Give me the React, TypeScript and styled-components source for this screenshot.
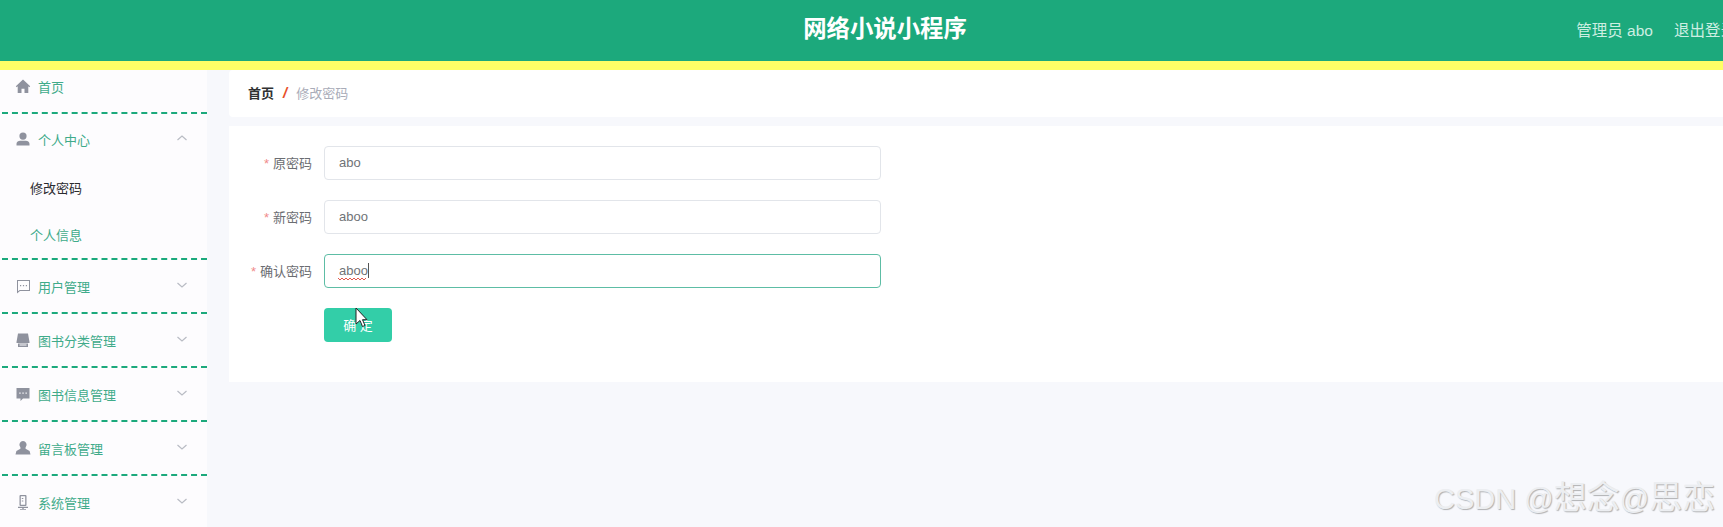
import React from "react";
import styled, { createGlobalStyle } from "styled-components";

const GlobalStyle = createGlobalStyle`
  html, body {
    margin: 0;
    padding: 0;
    height: 527px;
    overflow: hidden;
    background: #f7f8fc;
    font-family: "Liberation Sans", "Noto Sans CJK SC", sans-serif;
  }
`;

const Page = styled.div`
  position: relative;
  width: 1723px;
  height: 527px;
  overflow: hidden;
`;

const Header = styled.header`
  position: relative;
  display: flex;
  align-items: center;
  justify-content: flex-end;
  width: 1770px;
  height: 61px;
  box-sizing: border-box;
  padding-right: 34px;
  background: #1ca97c;
`;

const Title = styled.h1`
  position: absolute;
  left: 0;
  right: 0;
  top: 14px;
  margin: 0;
  text-align: center;
  font-size: 23.4px;
  line-height: 30px;
  font-weight: 700;
  color: #fff;
`;

const HeaderLinks = styled.div`
  display: flex;
  gap: 21px;
  font-size: 15.5px;
  color: #cdeee2;
  white-space: nowrap;
  margin-top: -4px;
`;

const Stripe = styled.div`
  height: 9px;
  background: #ffff66;
`;

const Body = styled.div`
  display: flex;
  width: 1723px;
  height: 457px;
`;

const Sidebar = styled.aside`
  width: 207px;
  flex: none;
  background: #fdfcfe;
  overflow: hidden;
`;

const Group = styled.div`
  & + & {
    margin-left: 2px;
    border-top: 2px dashed #1ca97c;
  }
  & + & > * {
    margin-left: -2px;
  }
`;

const MenuRow = styled.div<{ $open?: boolean }>`
  display: flex;
  align-items: center;
  height: 52px;
  box-sizing: border-box;
  padding: 0 18px ${(p) => (p.$open ? "2px" : "0")} 15px;
  font-size: 13px;
  color: #3fab8a;
`;

const HomeRow = styled(MenuRow)`
  height: 42px;
  padding-bottom: 10px;
`;

const MenuIcon = styled.svg`
  width: 16px;
  height: 16px;
  flex: none;
  margin-right: 7px;
  fill: #8f929e;
`;

const Chevron = styled.svg`
  width: 14px;
  height: 14px;
  margin-left: auto;
  margin-top: -2px;
  fill: none;
  stroke: #b9bcc4;
  stroke-width: 1.2;
`;

const SubItem = styled.div<{ $active?: boolean }>`
  height: 46px;
  box-sizing: border-box;
  padding: 0 0 ${(p) => (p.$active ? "4px" : "2px")} 30px;
  display: flex;
  align-items: center;
  font-size: 13px;
  color: ${(p) => (p.$active ? "#2a2a2e" : "#3fab8a")};
`;

const Main = styled.main`
  flex: 1;
  padding-left: 22px;
  display: flex;
  flex-direction: column;
  gap: 9px;
`;

const Breadcrumb = styled.nav`
  height: 47px;
  box-sizing: border-box;
  display: flex;
  align-items: center;
  padding: 0 0 2px 19px;
  background: #fff;
  border-radius: 4px 0 0 4px;
  font-size: 13px;
`;

const CrumbHome = styled.span`
  color: #303133;
  font-weight: 700;
`;

const CrumbSep = styled.span`
  margin: 0 9px 0 9px;
  color: #e8502a;
  font-size: 15px;
  font-weight: 700;
  font-style: italic;
`;

const CrumbCurrent = styled.span`
  color: #a9acb8;
`;

const Card = styled.section`
  height: 256px;
  box-sizing: border-box;
  padding-top: 20px;
  background: #fff;
`;

const FormRow = styled.div`
  display: flex;
  align-items: center;
  height: 34px;
  margin-bottom: 20px;
`;

const Label = styled.label`
  width: 83px;
  margin-right: 12px;
  padding-bottom: 2px;
  text-align: right;
  font-size: 13px;
  color: #6b6d72;
`;

const Star = styled.span`
  margin-right: 4px;
  color: #f08a8a;
`;

const FieldWrap = styled.div`
  position: relative;
  width: 557px;
  height: 34px;
`;

const Input = styled.input<{ $focus?: boolean }>`
  width: 100%;
  height: 100%;
  box-sizing: border-box;
  padding: 0 14px 2px;
  border: 1px solid #e2e5ea;
  border-radius: 4px;
  outline: none;
  background: #fff;
  font: inherit;
  font-size: 13px;
  color: #707377;
  ${(p) => p.$focus && "border: 1.5px solid #5dbda5;"}
`;

const CaretMark = styled.span`
  position: absolute;
  left: 44px;
  top: 9px;
  width: 1px;
  height: 15px;
  background: #555;
`;

const Squiggle = styled.svg`
  position: absolute;
  left: 14px;
  top: 23px;
  width: 30px;
  height: 4px;
  fill: none;
  stroke: #e2574c;
  stroke-width: 1;
`;

const ButtonRow = styled.div`
  position: relative;
  padding-left: 95px;
`;

const SubmitButton = styled.button`
  width: 68px;
  height: 34px;
  padding: 0 0 2px;
  border: 0;
  border-radius: 4px;
  background: #33cea8;
  color: #fff;
  font: inherit;
  font-size: 13px;
`;

const Cursor = styled.svg`
  position: absolute;
  left: 126px;
  top: -1px;
  width: 13px;
  height: 21px;
`;

const Watermark = styled.div`
  position: absolute;
  left: 1434px;
  top: 476px;
  font-size: 29px;
  line-height: 44px;
  white-space: nowrap;
  color: #eceef1;
  text-shadow: 1px 1px 1px #b0b1b3;
`;

const WatermarkCjk = styled.span`
  font-size: 33px;
`;

const icons: Record<string, React.ReactNode> = {
  home: <path d="M8 1.500 .8 8.300l.9.900 1-.9V15h3.800v-4.300h3V15h3.800V8.300l1 .9.900-.9z" />,
  user: <path d="M8 1.500a3.600 3.600 0 1 1 0 7.200 3.600 3.600 0 0 1 0-7.200zM1.500 14.500v-1.800c0-1.900 2-3 3.600-3h5.800c1.600 0 3.600 1.100 3.600 3v1.800z" />,
  chat: (
    <path
      fillRule="evenodd"
      d="M2 2h13v11H5l-3 2.500zM3 3v10.300L4.700 12H14V3zM5 7h1.200v1.200H5zM7.900 7h1.200v1.200H7.900zM10.800 7H12v1.200h-1.200z"
    />
  ),
  shelf: <path fillRule="evenodd" d="M3 1.500h10l1.500 8.500v1H1.500v-1zM3 11.500h10v3.500H3zM4.500 12.500v1h7v-1z" />,
  message: (
    <path
      fillRule="evenodd"
      d="M1.500 2h13v10.500H8L5.500 15v-2.500h-4zM4.300 6.500v1.300h1.300V6.500zM7.400 6.500v1.300h1.300V6.500zM10.500 6.500v1.300h1.300V6.500z"
    />
  ),
  board: <path d="M8 1a3.600 3.600 0 0 1 3 5.600c-.5.800-.7 1.500-.4 2.100l4 2.300.9 3.500H.5l.9-3.500 4-2.300c.3-.6.100-1.300-.4-2.100A3.600 3.600 0 0 1 8 1z" />,
  mic: (
    <path
      fillRule="evenodd"
      d="M5.500 1h5a1 1 0 0 1 1 1v9a1 1 0 0 1-1 1h-5a1 1 0 0 1-1-1V2a1 1 0 0 1 1-1zM5.800 2.300v8.400h4.400V2.300zM6.800 4h1.500v1H6.800zM6.800 6.500h1.500v1H6.800zM3 12.800h10V14H8.700v1H11v.8H5V15h2.300v-1H3z"
    />
  ),
};

const menu = [
  { icon: "user", label: "个人中心", open: true },
  { icon: "chat", label: "用户管理" },
  { icon: "shelf", label: "图书分类管理" },
  { icon: "message", label: "图书信息管理" },
  { icon: "board", label: "留言板管理" },
  { icon: "mic", label: "系统管理" },
];

const fields = [
  { label: "原密码", value: "abo" },
  { label: "新密码", value: "aboo" },
  { label: "确认密码", value: "aboo", focus: true },
];

export default function App() {
  return (
    <Page>
      <GlobalStyle />
      <Header>
        <Title>网络小说小程序</Title>
        <HeaderLinks>
          <span>管理员 abo</span>
          <span>退出登录</span>
        </HeaderLinks>
      </Header>
      <Stripe />
      <Body>
        <Sidebar>
          <Group>
            <HomeRow>
              <MenuIcon viewBox="0 0 16 16">{icons.home}</MenuIcon>
              首页
            </HomeRow>
          </Group>
          {menu.map((item) => (
            <Group key={item.label}>
              <MenuRow $open={item.open}>
                <MenuIcon viewBox="0 0 16 16">{icons[item.icon]}</MenuIcon>
                {item.label}
                <Chevron viewBox="0 0 14 14">
                  <path d={item.open ? "M2.500 9 7 5l4.500 4" : "M2.500 5 7 9l4.500-4"} />
                </Chevron>
              </MenuRow>
              {item.open && (
                <>
                  <SubItem $active>修改密码</SubItem>
                  <SubItem>个人信息</SubItem>
                </>
              )}
            </Group>
          ))}
        </Sidebar>
        <Main>
          <Breadcrumb>
            <CrumbHome>首页</CrumbHome>
            <CrumbSep>/</CrumbSep>
            <CrumbCurrent>修改密码</CrumbCurrent>
          </Breadcrumb>
          <Card>
            {fields.map((f) => (
              <FormRow key={f.label}>
                <Label>
                  <Star>*</Star>
                  {f.label}
                </Label>
                <FieldWrap>
                  <Input readOnly value={f.value} $focus={f.focus} spellCheck={false} />
                  {f.focus && (
                    <>
                      <CaretMark />
                      <Squiggle viewBox="0 0 30 4">
                        <path d="M0 1l2 2 2-2 2 2 2-2 2 2 2-2 2 2 2-2 2 2 2-2 2 2 2-2 2 2 2-2" />
                      </Squiggle>
                    </>
                  )}
                </FieldWrap>
              </FormRow>
            ))}
            <ButtonRow>
              <SubmitButton>确 定</SubmitButton>
              <Cursor viewBox="0 0 13 21">
                <path d="M1 1v16l4-3.500 2.500 6 2.500-1-2.500-5.800H12z" fill="#fff" stroke="#222" strokeWidth="1" />
              </Cursor>
            </ButtonRow>
          </Card>
        </Main>
      </Body>
      <Watermark>
        CSDN @<WatermarkCjk>想念</WatermarkCjk>@<WatermarkCjk>思恋</WatermarkCjk>
      </Watermark>
    </Page>
  );
}
